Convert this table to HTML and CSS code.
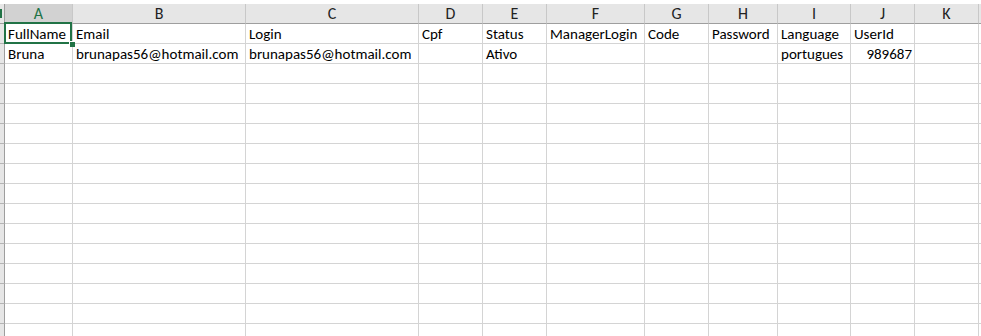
FILE: index.html
```html
<!DOCTYPE html>
<html lang="en">
<head>
    <meta charset="UTF-8">
    <meta name="viewport" content="width=device-width, initial-scale=1.0">
    <title>Usuarios</title>
    <link rel="stylesheet" href="styles.css">
</head>
<body>
    <div class="sheet">
        <!-- column headers -->
        <div class="corner"><span class="corner-mark"></span></div>
        <div class="col-head active">A</div>
        <div class="col-head">B</div>
        <div class="col-head">C</div>
        <div class="col-head">D</div>
        <div class="col-head">E</div>
        <div class="col-head">F</div>
        <div class="col-head">G</div>
        <div class="col-head">H</div>
        <div class="col-head">I</div>
        <div class="col-head">J</div>
        <div class="col-head">K</div>
        <div class="col-head last"></div>

        <!-- row 1 -->
        <div class="row-head"></div>
        <div class="cell">FullName</div>
        <div class="cell">Email</div>
        <div class="cell">Login</div>
        <div class="cell">Cpf</div>
        <div class="cell">Status</div>
        <div class="cell">ManagerLogin</div>
        <div class="cell">Code</div>
        <div class="cell">Password</div>
        <div class="cell">Language</div>
        <div class="cell">UserId</div>
        <div class="cell"></div>
        <div class="cell last"></div>

        <!-- row 2 -->
        <div class="row-head"></div>
        <div class="cell">Bruna</div>
        <div class="cell">brunapas56@hotmail.com</div>
        <div class="cell">brunapas56@hotmail.com</div>
        <div class="cell"></div>
        <div class="cell">Ativo</div>
        <div class="cell"></div>
        <div class="cell"></div>
        <div class="cell"></div>
        <div class="cell">portugues</div>
        <div class="cell num">989687</div>
        <div class="cell"></div>
        <div class="cell last"></div>
    </div>

    <script>
        // fill the empty rows below the data
        const sheet = document.querySelector('.sheet');
        for (let r = 3; r <= 16; r++) {
            const head = document.createElement('div');
            head.className = 'row-head';
            sheet.appendChild(head);
            for (let c = 0; c < 12; c++) {
                const cell = document.createElement('div');
                cell.className = c === 11 ? 'cell last' : 'cell';
                sheet.appendChild(cell);
            }
        }

        // selected cell A1
        const sel = document.createElement('div');
        sel.className = 'selection';
        sel.innerHTML = '<span class="handle"></span>';
        sheet.appendChild(sel);
    </script>
</body>
</html>
```

FILE: styles.css
```css
body {
    margin: 0;
    padding: 0;
    background-color: #fff;
    overflow: hidden;
    font-family: Carlito, Lato, "Liberation Sans", sans-serif;
}
.sheet {
    position: relative;
    margin-top: 4px;
    display: grid;
    grid-template-columns: 5px 68px 173px 173px 64px 64px 98px 64px 69px 73px 64px 64px 1fr;
    grid-auto-rows: 20px;
}
.corner {
    position: relative;
    background-color: #e6e6e6;
    border-right: 1px solid #9e9e9e;
    border-bottom: 1px solid #9e9e9e;
}
.corner-mark {
    position: absolute;
    left: 0;
    top: 5px;
    width: 2px;
    height: 9px;
    background-color: #217346;
}
.col-head {
    background-color: #e6e6e6;
    border-right: 1px solid #c8c8c8;
    border-bottom: 1px solid #9e9e9e;
    color: #222;
    font-size: 16px;
    line-height: 20px;
    text-align: center;
}
.col-head.active {
    background-color: #d2d2d2;
    color: #217346;
}
.row-head {
    background-color: #e6e6e6;
    border-right: 1px solid #9e9e9e;
    border-bottom: 1px solid #b4b4b4;
}
.cell {
    border-right: 1px solid #d4d4d4;
    border-bottom: 1px solid #d4d4d4;
    padding: 1px 2px 0 3px;
    font-size: 15px;
    line-height: 18px;
    color: #000;
    white-space: nowrap;
    overflow: hidden;
}
.cell.num {
    text-align: right;
}
.last {
    border-right: none;
}
.selection {
    position: absolute;
    left: 4px;
    top: 18px;
    width: 64px;
    height: 18px;
    border: 2px solid #217346;
}
.handle {
    position: absolute;
    right: -5px;
    bottom: -5px;
    width: 5px;
    height: 5px;
    background-color: #217346;
    border-left: 1px solid #fff;
    border-top: 1px solid #fff;
}
```
